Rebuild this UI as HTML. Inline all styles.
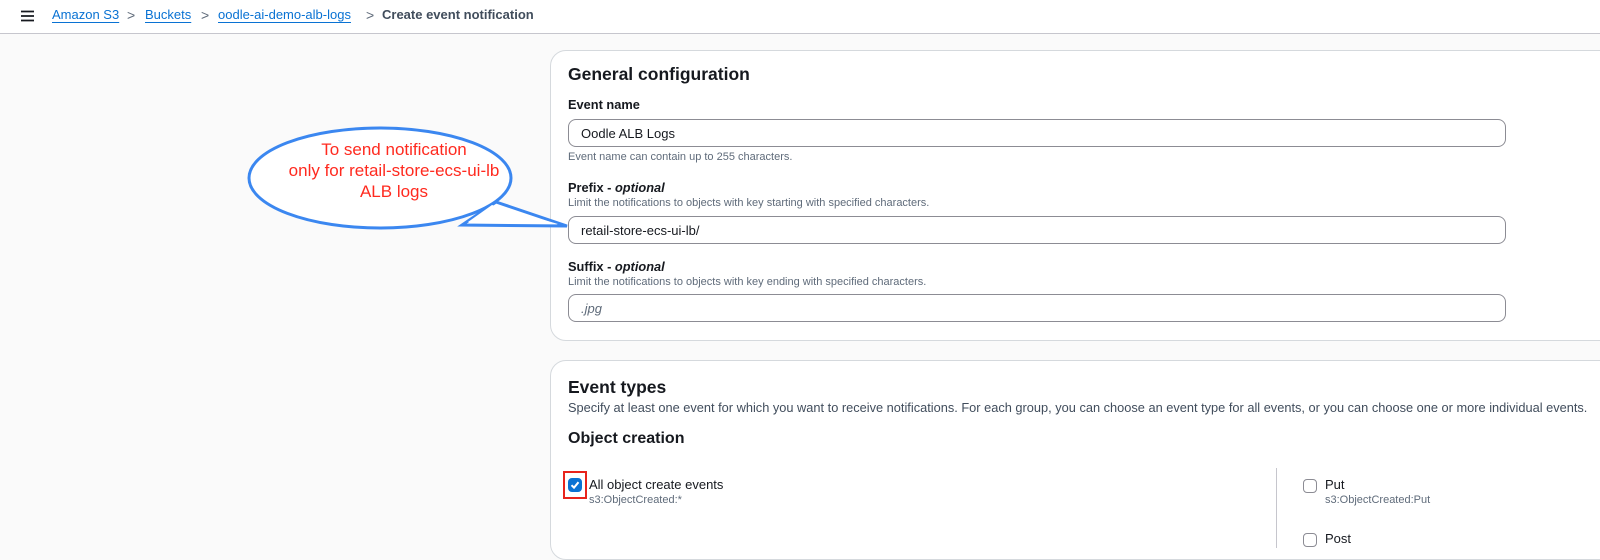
<!DOCTYPE html>
<html><head><style>
*{box-sizing:border-box;margin:0;padding:0}
body{width:1600px;height:545px;overflow:hidden;background:#fafafa;font-family:"Liberation Sans",Arial,sans-serif;color:#16191f;position:relative}
.hdr{position:absolute;left:0;top:0;width:1600px;height:34px;background:#fff;border-bottom:1px solid #c6c6cd}
.a{position:absolute;top:7px;font-size:13px;white-space:nowrap}
.lk{color:#0972d3;text-decoration:underline;text-underline-offset:3px}
.sep{color:#5f6b7a;font-size:14px}
.card{position:absolute;left:550px;width:1070px;background:#fff;border:1px solid #d5d9dd;border-radius:16px}
.t{position:absolute;white-space:nowrap}
.h2{font-size:17.5px;font-weight:bold}
.lbl{font-size:12.8px;font-weight:bold}
.hint{font-size:11px;color:#5f6b7a}
.inp{position:absolute;left:568px;width:938px;height:28px;border:1px solid #8c8c94;border-radius:8px;background:#fff;font-size:13px;padding:6px 0 0 12px}
.cb{position:absolute;width:14px;height:14px;border:1.5px solid #8c8c94;border-radius:4px;background:#fff}
</style></head><body>
<div class="hdr"></div>
<svg style="position:absolute;left:21px;top:10px" width="14" height="12"><path d="M0 1.5H13M0 6H13M0 10.5H13" stroke="#16191f" stroke-width="1.8"/></svg>
<span class="a lk" style="left:52px">Amazon S3</span>
<span class="a sep" style="left:127px">&gt;</span>
<span class="a lk" style="left:145px">Buckets</span>
<span class="a sep" style="left:201px">&gt;</span>
<span class="a lk" style="left:218px">oodle-ai-demo-alb-logs</span>
<span class="a sep" style="left:366px">&gt;</span>
<span class="a" style="left:382px;font-weight:bold;color:#414d5c">Create event notification</span>

<div class="card" style="top:50px;height:291px"></div>
<div class="t h2" style="left:568px;top:64px">General configuration</div>
<div class="t lbl" style="left:568px;top:97px">Event name</div>
<div class="inp" style="top:119px">Oodle ALB Logs</div>
<div class="t hint" style="left:568px;top:151px">Event name can contain up to 255 characters.</div>
<div class="t lbl" style="left:568px;top:180px">Prefix - <i>optional</i></div>
<div class="t hint" style="left:568px;top:197px">Limit the notifications to objects with key starting with specified characters.</div>
<div class="inp" style="top:216px">retail-store-ecs-ui-lb/</div>
<div class="t lbl" style="left:568px;top:259px">Suffix - <i>optional</i></div>
<div class="t hint" style="left:568px;top:276px">Limit the notifications to objects with key ending with specified characters.</div>
<div class="inp" style="top:294px;color:#5f6b7a;font-style:italic">.jpg</div>

<div class="card" style="top:360px;height:200px"></div>
<div class="t h2" style="left:568px;top:377px">Event types</div>
<div class="t" style="left:568px;top:400px;font-size:12.8px;color:#414d5c">Specify at least one event for which you want to receive notifications. For each group, you can choose an event type for all events, or you can choose one or more individual events.</div>
<div class="t" style="left:568px;top:430px;font-size:16px;font-weight:bold">Object creation</div>
<div style="position:absolute;left:563px;top:471px;width:24px;height:28px;border:2px solid #e8241c"></div>
<div class="cb" style="left:568px;top:478px;background:#0972d3;border-color:#0972d3"></div>
<svg style="position:absolute;left:568px;top:478px" width="14" height="14"><path d="M3.5 7.2L6 9.6L10.5 4.2" stroke="#fff" stroke-width="2" fill="none"/></svg>
<div class="t" style="left:589px;top:477px;font-size:13px">All object create events</div>
<div class="t hint" style="left:589px;top:494px">s3:ObjectCreated:*</div>
<div style="position:absolute;left:1276px;top:468px;width:1px;height:80px;background:#c6c6cd"></div>
<div class="cb" style="left:1303px;top:479px"></div>
<div class="t" style="left:1325px;top:477px;font-size:13px">Put</div>
<div class="t hint" style="left:1325px;top:494px">s3:ObjectCreated:Put</div>
<div class="cb" style="left:1303px;top:533px"></div>
<div class="t" style="left:1325px;top:531px;font-size:13px">Post</div>

<svg style="position:absolute;left:0;top:0" width="600" height="260">
<path d="M496 202L567 226L462 225Z" fill="#fff" stroke="#3b87f0" stroke-width="3" stroke-linejoin="miter"/>
<ellipse cx="380" cy="178" rx="131" ry="50" fill="#fff" stroke="#3b87f0" stroke-width="3"/>
<path d="M492 205L558 224L468 222Z" fill="#fff"/>
<g font-family="Liberation Sans,Arial,sans-serif" font-size="17" fill="#ff2a1f" text-anchor="middle">
<text x="394" y="155">To send notification</text>
<text x="394" y="176">only for retail-store-ecs-ui-lb</text>
<text x="394" y="197">ALB logs</text>
</g>
</svg>
</body></html>
